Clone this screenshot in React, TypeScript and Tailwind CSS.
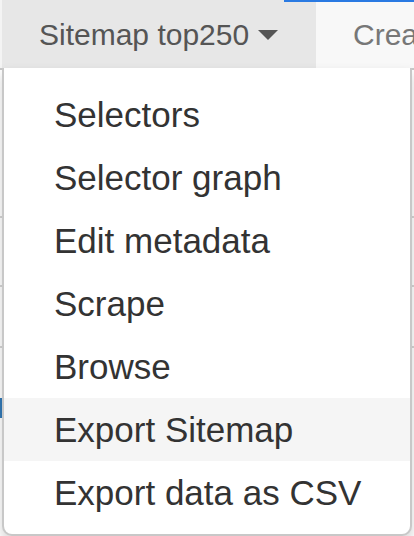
import React from "react"

const items = [
  "Selectors",
  "Selector graph",
  "Edit metadata",
  "Scrape",
  "Browse",
  "Export Sitemap",
  "Export data as CSV",
]

export default function App() {
  return (
    <div
      className="relative w-[414px] h-[536px] overflow-hidden bg-white"
      style={{ fontFamily: '"Liberation Sans", Arial, sans-serif' }}
    >
      {/* navbar */}
      <div className="flex h-[70px] border-b-2 border-[#c9c9c9] bg-[#f8f8f8]">
        <div className="flex w-[316px] shrink-0 items-center border-l-2 border-[#f4f4f4] bg-[#e7e7e7] pl-[37px] text-[30px] text-[#555]">
          <span>Sitemap top250</span>
          <span className="ml-[9px] mt-[2px] h-0 w-0 border-x-[10px] border-t-[10px] border-x-transparent border-t-[#555]"></span>
        </div>
        <div className="flex shrink-0 items-center pl-[37px] text-[30px] text-[#777]">
          <span>Create</span>
        </div>
      </div>
      <div className="absolute left-[284px] top-0 h-[2px] w-[130px] bg-[#2a7ae2]"></div>

      {/* page content peeking out behind the menu */}
      <div className="flex flex-col">
        <div className="h-[148px] border-b-2 border-[#d5d5d5]"></div>
        <div className="h-[69px] border-b-2 border-[#d5d5d5]"></div>
        <div className="h-[61px] border-b-2 border-[#d5d5d5]"></div>
        <div className="mt-[50px] h-[20px] w-[4px] bg-[#337ab7]"></div>
      </div>

      {/* dropdown menu */}
      <div className="absolute left-[2px] top-[68px] w-[410px] rounded-b-[10px] border-2 border-t-0 border-[#c8c8c8] bg-white pt-[15px] pb-[10px] shadow-[0_6px_12px_rgba(0,0,0,0.175)]">
        {items.map((item) => (
          <div
            key={item}
            className={`h-[63px] pl-[50px] text-[35px] leading-[63px] text-[#333] ${
              item === "Export Sitemap" ? "bg-[#f5f5f5]" : ""
            }`}
          >
            {item}
          </div>
        ))}
      </div>
    </div>
  )
}
